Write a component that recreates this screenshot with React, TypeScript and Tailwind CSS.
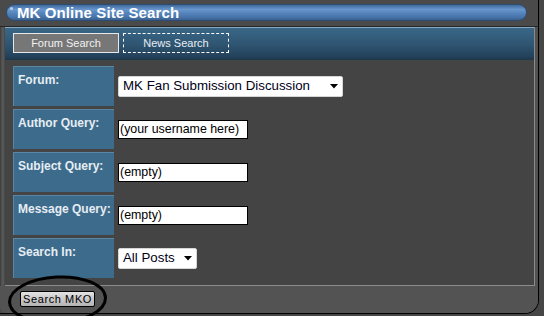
import React from "react";

const font = { fontFamily: '"Liberation Sans", Arial, sans-serif' };

function Caret() {
  return (
    <svg width="8" height="5" viewBox="0 0 8 5" className="shrink-0">
      <path d="M0 0 H8 L4 4.5 Z" fill="#000" />
    </svg>
  );
}

function Label({ text }: { text: string }) {
  return (
    <div className="w-[101px] h-[40px] shrink-0 bg-[#3d6b8c] border-t border-l border-[#5a86a4] pl-[4px] pt-[6px] text-[12px] font-bold leading-[14px] text-[#e6edf3]">
      {text}
    </div>
  );
}

function TextBox({ value }: { value: string }) {
  return (
    <div className="w-[130px] h-[19px] bg-white border border-black pl-[1px] flex items-center text-[12.4px] text-black leading-none whitespace-nowrap overflow-hidden">
      {value}
    </div>
  );
}

function Row({ label, children }: { label: string; children: React.ReactNode }) {
  return (
    <div className="flex items-center gap-[4px]">
      <Label text={label} />
      {children}
    </div>
  );
}

export default function App() {
  return (
    <div className="relative w-[544px] h-[316px] bg-[#464646] overflow-hidden" style={font}>
      <div className="w-[539px] h-[314px] bg-[#4a4a4a] border-r border-b border-black rounded-br-[14px] flex flex-col overflow-hidden">
        {/* title */}
        <div className="h-[27px] shrink-0 pt-[4px] pl-[6px] bg-[#4a4a4a] border-b border-[#262626]">
          <div className="relative w-[521px] h-[17px] rounded-full border border-[#2e4c70] bg-[linear-gradient(to_bottom,#3f6a9c_0%,#6796cc_30%,#5584bb_55%,#4874aa_80%,#3a6290_100%)] flex items-center pl-[10px]">
            <div className="absolute left-[3px] top-[2px] w-[3px] h-[3px] rounded-full bg-[#b8d0ea]" />
            <span className="text-[15px] font-bold text-white leading-none tracking-[0.1px]">MK Online Site Search</span>
          </div>
        </div>
        {/* body */}
        <div className="flex h-[259px] shrink-0">
          <div className="w-[5px] bg-[linear-gradient(to_right,#3a3a3a_0%,#565656_40%,#585858_80%,#3a3a3a_100%)]" />
          <div className="w-[530px] flex flex-col border-r border-[#8a8a8a]">
            {/* header tabs */}
            <div className="h-[33px] shrink-0 border-t border-[#86a9c0] bg-[linear-gradient(to_bottom,#3a6787_0%,#2f5673_50%,#23415a_90%,#1e3749_100%)] flex items-start pt-[5px] pl-[8px] gap-[4px]">
              <div className="w-[106px] h-[20px] bg-[#777777] border border-[#e8e8e8] flex items-center justify-center text-[11px] text-[#f2f2f2] leading-none">
                Forum Search
              </div>
              <div className="w-[106px] h-[20px] border border-dashed border-white flex items-center justify-center text-[11px] text-[#e8eef3] leading-none">
                News Search
              </div>
            </div>
            {/* content */}
            <div className="h-[226px] shrink-0 bg-[#444444] border-b border-[#8c8c8c] pt-[6px] pl-[8px] flex flex-col gap-[3px]">
              <Row label="Forum:">
                <div className="w-[225px] h-[21px] bg-white border border-[#d6d6d6] rounded-[2px] flex items-center justify-between pl-[4px] pr-[4px] text-[13.3px] text-[#000018] leading-none whitespace-nowrap">
                  <span>MK Fan Submission Discussion</span>
                  <Caret />
                </div>
              </Row>
              <Row label="Author Query:">
                <TextBox value="(your username here)" />
              </Row>
              <Row label="Subject Query:">
                <TextBox value="(empty)" />
              </Row>
              <Row label="Message Query:">
                <TextBox value="(empty)" />
              </Row>
              <Row label="Search In:">
                <div className="w-[79px] h-[21px] bg-white border border-[#d6d6d6] rounded-[2px] flex items-center justify-between pl-[4px] pr-[4px] text-[13.3px] text-[#000018] leading-none whitespace-nowrap">
                  <span>All Posts</span>
                  <Caret />
                </div>
              </Row>
            </div>
          </div>
          <div className="flex-1 bg-[#525252]" />
        </div>
        {/* footer */}
        <div className="h-[27px] shrink-0 bg-[#535353] pl-[20px] pt-[5px] rounded-bl-[6px]">
          <div className="w-[75px] h-[16px] rounded-[2px] border border-black bg-[linear-gradient(to_bottom,#e4e4e4_0%,#c9c9c9_50%,#b4b4b4_100%)] flex items-center justify-center text-[11px] text-black leading-none tracking-[0.6px]">
            Search MKO
          </div>
        </div>
      </div>
      {/* hand-drawn annotation circle */}
      <svg className="absolute left-0 top-[270px]" width="130" height="46" viewBox="0 0 130 46">
        <ellipse cx="57.5" cy="30" rx="48" ry="23" fill="none" stroke="#000" strokeWidth="3" transform="rotate(-3 57.5 30)" />
      </svg>
    </div>
  );
}
